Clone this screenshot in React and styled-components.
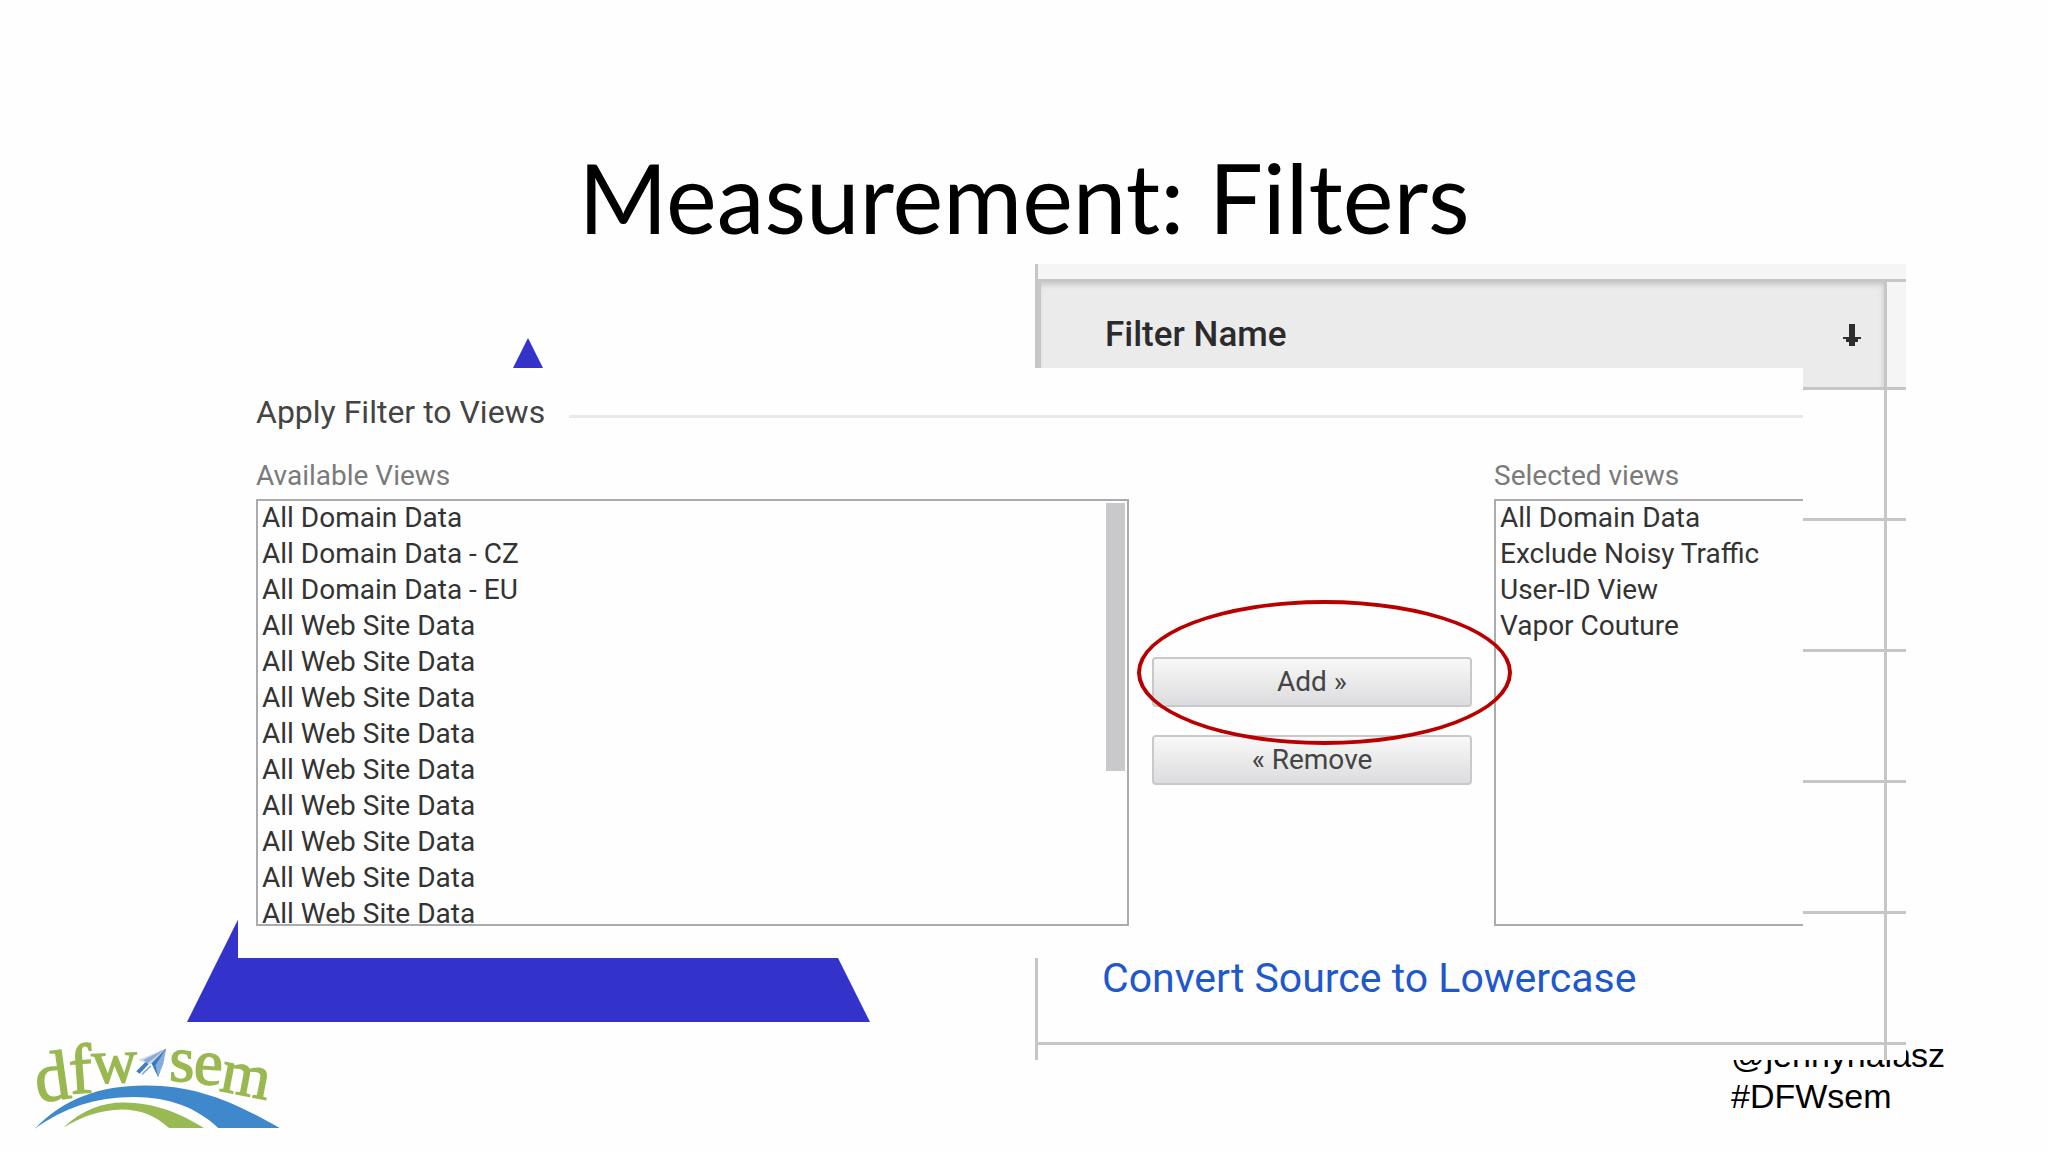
import styled, { createGlobalStyle } from 'styled-components'


const GlobalStyle = createGlobalStyle`
  * {
    box-sizing: border-box;
  }

  body {
    margin: 0;
    background: #fefefe;
  }
`;

/* the pictures on the slide overlap, so they share one grid */
const Slide = styled.main`
  display: grid;
  min-height: 100vh;
  grid-template-columns: 187fr 51fr 632fr 165fr 768fr 103fr 142fr;
  grid-template-rows: 264px 74px 30px 590px 64px 38px 1fr;
  overflow: hidden;
`;

const Title = styled.h1`
  grid-area: 1 / 1 / 2 / 8;
  margin: 0;
  padding-top: 141px;
  font-family: "Trebuchet MS", Lato, sans-serif;
  font-size: 96px;
  font-weight: 400;
  line-height: 112px;
  text-align: center;
  color: #000;
`;

const Triangle = styled.svg`
  grid-area: 3 / 2 / 6 / 4;
  width: 100%;
  height: 100%;
`;

const Footer = styled.footer`
  grid-area: 6 / 1 / 8 / 8;
  display: flex;
  justify-content: space-between;
  padding-left: 24px;
`;

const Logo = styled.svg`
  width: 259px;
  height: 103px;
  margin-top: 8px;
  overflow: visible;
`;

const Handles = styled.p`
  width: 317px;
  margin: 0;
  padding-top: 13px;
  font-family: "Liberation Sans", Arial, sans-serif;
  font-size: 34px;
  line-height: 41px;
  color: #000;
`;

const FilterPanel = styled.section`
  grid-area: 2 / 5 / 7 / 7;
  z-index: 1;
  padding-top: 15px;
  border-left: 3px solid #c6c6c8;
  background: linear-gradient(#f5f5f5 15px, #fefefe 15px);
  overflow: hidden;
`;

const FilterTable = styled.table`
  width: 100%;
  border-collapse: separate;
  border-spacing: 0;
  table-layout: fixed;
  font-family: Roboto, sans-serif;
`;

const HeadCell = styled.th`
  height: 111px;
  padding: 0 22px 0 64px;
  border: solid #c6c6c8;
  border-width: 3px 0 3px 3px;
  background: #ebebec;
  box-shadow: inset 0 5px 5px -2px #c8c8c8, inset -5px 0 4px -3px #dadadc;
  font-size: 35px;
  font-weight: 500;
  text-align: left;
  color: #2b2b2b;
`;

const HeadRow = styled.div`
  display: flex;
  align-items: center;
  justify-content: space-between;
`;

const SortButton = styled.button`
  display: flex;
  padding: 0;
  border: 0;
  background: none;
`;

const SideHead = styled.td`
  width: 22px;
  padding: 0;
  border: solid #c6c6c8;
  border-width: 3px 0 3px 3px;
  background: #f5f5f6;
`;

const Cell = styled.td`
  height: ${(props) => (props.$last ? '16px' : '131px')};
  padding: 0 0 0 64px;
  border-bottom: ${(props) => (props.$last ? '0' : '3px solid #c6c6c8')};
`;

const SideCell = styled(Cell)`
  padding: 0;
  border-left: 3px solid #c6c6c8;
`;

const FilterLink = styled.a`
  font-size: 41px;
  line-height: 46px;
  color: #1f58cc;
  text-decoration: none;
`;

const Dialog = styled.section`
  grid-area: 4 / 3 / 5 / 6;
  z-index: 2;
  padding: 24px 0 31px 18px;
  background: #fefefe;
  font-family: Roboto, sans-serif;
  overflow: hidden;
`;

const DialogHead = styled.div`
  display: flex;
  align-items: center;
  gap: 24px;
  margin-bottom: 28px;
`;

const DialogTitle = styled.h2`
  margin: 0;
  font-size: 32px;
  font-weight: 400;
  line-height: 40px;
  color: #444;
`;

const Rule = styled.hr`
  flex: 1;
  height: 3px;
  margin: 9px 0 0;
  border: 0;
  background: #e8e8ec;
`;

const Columns = styled.div`
  display: grid;
  grid-template-columns: 873fr 365fr 309fr;
`;

const Field = styled.div`
  display: flex;
  flex-direction: column;
  gap: 7px;
`;

const Label = styled.label`
  font-size: 28px;
  line-height: 32px;
  color: #7a7a7a;
`;

const ListWrap = styled.div`
  position: relative;
  height: 427px;
`;

const List = styled.select`
  display: block;
  width: 100%;
  height: 100%;
  padding: 0;
  border: 2px solid #ababad;
  border-right-width: ${(props) => (props.$cut ? '0' : '2px')};
  border-radius: 0;
  outline: 0;
  background: #fefefe;
  font-family: Roboto, sans-serif;
  font-size: 28px;
  color: #333;
  overflow: hidden;
  scrollbar-width: none;

  option {
    height: 36px;
    min-height: 36px;
    padding: 0 4px;
    line-height: 32px;
  }
`;

const Thumb = styled.span`
  position: absolute;
  top: 4px;
  right: 4px;
  width: 19px;
  height: 268px;
  background: #c9c8ca;
`;

const Actions = styled.div`
  position: relative;
  display: flex;
  flex-direction: column;
  gap: 28px;
  padding: 197px 22px 0 23px;
`;

const ActionButton = styled.button`
  height: 50px;
  padding: 0;
  border: 2px solid #c9c9cb;
  border-radius: 4px;
  background: linear-gradient(#f8f8f8, #dcdcde);
  font-family: Roboto, sans-serif;
  font-size: 28px;
  line-height: 32px;
  color: #444;
`;

const Highlight = styled.span`
  position: absolute;
  top: 140px;
  left: 8px;
  right: -18px;
  height: 145px;
  border: 4px solid #b90000;
  border-radius: 50%;
  pointer-events: none;
  z-index: 1;
`;


const available = [
  'All Domain Data',
  'All Domain Data - CZ',
  'All Domain Data - EU',
  ...Array(9).fill('All Web Site Data'),
]

const selected = ['All Domain Data', 'Exclude Noisy Traffic', 'User-ID View', 'Vapor Couture']

const filters = ['', '', '', '', 'Convert Source to Lowercase']

/* the letters follow the arc, each with its own size */
const letters = [
  { char: 'd', x: 112, y: 308, size: 212, turn: -8 },
  { char: 'f', x: 210, y: 282, size: 212, turn: -4 },
  { char: 'w', x: 276, y: 250, size: 190, turn: -2 },
  { char: 's', x: 506, y: 243, size: 196, turn: 2 },
  { char: 'e', x: 578, y: 250, size: 196, turn: 4 },
  { char: 'm', x: 656, y: 272, size: 190, turn: 11 },
]


const DfwLogo = () => (
  <Logo viewBox="72 90 776 310" role="img" aria-label="dfwsem">
    <g fill="#9ab850" stroke="#9ab850" strokeWidth="4" fontFamily="Liberation Serif, serif">
      {letters.map((l) => (
        <text key={l.char} x={l.x} y={l.y} rotate={l.turn} fontSize={l.size}>{l.char}</text>
      ))}
    </g>
    <path d="M415 180L498 146L452 194Z" fill="#c9d7ea" />
    <path d="M498 146L430 180L442 190Z" fill="#8eaad0" />
    <path d="M498 146L454 190L474 232Z" fill="#3b78bd" />
    <path d="M498 146L466 196L474 232L490 190Z" fill="#84addb" />
    <path d="M408 214L436 186L446 192L418 222Z" fill="#3f7fc0" />
    <path d="M425 224L452 198" stroke="#7fa8d4" strokeWidth="5" />
    <path d="M102 388C190 296 300 256 440 257C590 258 700 305 840 385H655C590 325 510 292 400 292C285 292 190 325 102 388Z" fill="#3e88cb" />
    <path d="M188 384C245 330 305 308 370 308C465 309 540 340 612 385H507C465 347 420 329 365 329C300 330 245 350 188 384Z" fill="#98b954" />
  </Logo>
)


const App = () => {
  return (
    <>
      <GlobalStyle />
      <Slide>
        <Title>Measurement: Filters</Title>

        <Triangle viewBox="0 0 683 684" preserveAspectRatio="none" aria-hidden="true">
          <polygon points="341,0 683,684 0,684" fill="#3333cc" />
        </Triangle>

        <Footer>
          <DfwLogo />
          <Handles>@jennyhalasz<br />#DFWsem</Handles>
        </Footer>

        <FilterPanel>
          <FilterTable>
            <colgroup>
              <col />
              <col width="22" />
            </colgroup>
            <thead>
              <tr>
                <HeadCell scope="col">
                  <HeadRow>
                    Filter Name
                    <SortButton aria-label="Sort">
                      <svg width="20" height="22" viewBox="0 0 20 22">
                        <path d="M7 0h6v13h6v2h-3v3h-3v4h-6v-4h-3v-3h-3v-2h6z" fill="#2e2e2e" />
                      </svg>
                    </SortButton>
                  </HeadRow>
                </HeadCell>
                <SideHead />
              </tr>
            </thead>
            <tbody>
              {filters.map((name, i) => (
                <tr key={i}>
                  <Cell>{name && <FilterLink href="#filter">{name}</FilterLink>}</Cell>
                  <SideCell />
                </tr>
              ))}
              <tr>
                <Cell $last />
                <SideCell $last />
              </tr>
            </tbody>
          </FilterTable>
        </FilterPanel>

        <Dialog>
          <DialogHead>
            <DialogTitle>Apply Filter to Views</DialogTitle>
            <Rule />
          </DialogHead>
          <Columns>
            <Field>
              <Label htmlFor="available">Available Views</Label>
              <ListWrap>
                <List id="available" multiple>
                  {available.map((view, i) => <option key={i} value={i}>{view}</option>)}
                </List>
                <Thumb />
              </ListWrap>
            </Field>
            <Actions>
              <ActionButton>Add »</ActionButton>
              <ActionButton>« Remove</ActionButton>
              <Highlight />
            </Actions>
            <Field>
              <Label htmlFor="selected">Selected views</Label>
              <ListWrap>
                <List id="selected" multiple $cut>
                  {selected.map((view) => <option key={view}>{view}</option>)}
                </List>
              </ListWrap>
            </Field>
          </Columns>
        </Dialog>
      </Slide>
    </>
  )
}

export default App
